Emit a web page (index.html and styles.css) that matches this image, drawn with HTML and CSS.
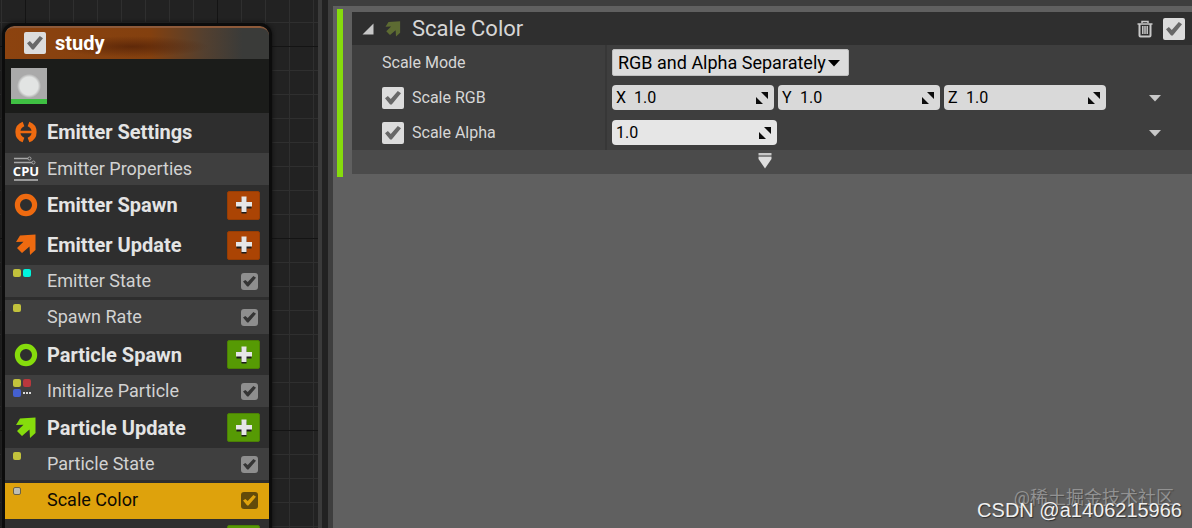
FILE: index.html
```
<!DOCTYPE html>
<html lang="en">

<head>
    <meta charset="UTF-8">
    <meta name="viewport" content="width=device-width, initial-scale=1.0">
    <title>Niagara Emitter - study</title>
    <link rel="stylesheet" href="styles.css">
</head>

<body>
    <!-- Shared icons -->
    <svg class="icon-defs" aria-hidden="true">
        <symbol id="icon-ring" viewBox="0 0 24 24">
            <circle cx="12" cy="12" r="8.6" fill="none" stroke="currentColor" stroke-width="5.2" />
        </symbol>
        <symbol id="icon-arrow" viewBox="0 0 24 24">
            <path fill="currentColor" d="M6 2.500L21.500 1.500V17L16 22L15.500 13.500L8 20L3 15L9.500 8.800L2 9Z" />
        </symbol>
        <symbol id="icon-plus" viewBox="0 0 18 18">
            <path fill="#1c1c1c" d="M6.500 2.500h5v5h5v5h-5v5h-5v-5h-5v-5h5z" />
            <path fill="#e6e6e6" d="M6.500 .5h5v5.500h5.500v4.500h-5.500v5.500h-5v-5.500h-5.500v-4.500h5.500z" />
        </symbol>
        <symbol id="icon-drag" viewBox="0 0 14 14">
            <path fill="#0c0c0c" d="M6 1H13V8ZM1 6V13H8Z" />
        </symbol>
        <symbol id="icon-down" viewBox="0 0 14 8">
            <path fill="currentColor" d="M1 1H13L7 7.500Z" />
        </symbol>
    </svg>

    <div class="editor">
        <!-- Overview graph -->
        <section class="graph">
            <div class="node">
                <header class="node-header">
                    <input type="checkbox" class="check" id="emitter-enabled" checked>
                    <label for="emitter-enabled">study</label>
                </header>
                <div class="node-preview">
                    <div class="thumbnail"></div>
                </div>

                <div class="group emitter settings">
                    <svg class="group-icon" viewBox="0 0 24 24">
                        <path fill="none" stroke="currentColor" stroke-width="5" d="M9.500 4A8.500 8.500 0 0 0 9.500 20M14.500 4A8.500 8.500 0 0 1 14.500 20" />
                        <path fill="none" stroke="currentColor" stroke-width="2.500" d="M5 12H19" />
                    </svg>
                    <h2>Emitter Settings</h2>
                </div>
                <div class="module">
                    <svg class="cpu-icon" viewBox="0 0 26 26">
                        <path fill="none" stroke="#a8a8a8" stroke-width="1.500" d="M1 2.500H15M1 6.500H19" />
                        <circle cx="16.500" cy="2.500" r="1.500" fill="none" stroke="#a8a8a8" />
                        <circle cx="20.500" cy="6.500" r="1.500" fill="none" stroke="#a8a8a8" />
                        <text x="13" y="20" text-anchor="middle">CPU</text>
                        <path stroke="#bdbdbd" stroke-width="1.500" d="M1 24H25" />
                    </svg>
                    <span>Emitter Properties</span>
                </div>

                <div class="group emitter">
                    <svg class="group-icon"><use href="#icon-ring" /></svg>
                    <h2>Emitter Spawn</h2>
                    <button type="button" class="add" aria-label="Add to Emitter Spawn"><svg><use href="#icon-plus" /></svg></button>
                </div>
                <div class="group emitter">
                    <svg class="group-icon"><use href="#icon-arrow" /></svg>
                    <h2>Emitter Update</h2>
                    <button type="button" class="add" aria-label="Add to Emitter Update"><svg><use href="#icon-plus" /></svg></button>
                </div>
                <div class="module">
                    <div class="tags"><i class="yellow"></i><i class="cyan"></i></div>
                    <label for="emitter-state">Emitter State</label>
                    <input type="checkbox" class="check small" id="emitter-state" checked>
                </div>
                <div class="module">
                    <div class="tags"><i class="yellow"></i></div>
                    <label for="spawn-rate">Spawn Rate</label>
                    <input type="checkbox" class="check small" id="spawn-rate" checked>
                </div>

                <div class="group particle">
                    <svg class="group-icon"><use href="#icon-ring" /></svg>
                    <h2>Particle Spawn</h2>
                    <button type="button" class="add" aria-label="Add to Particle Spawn"><svg><use href="#icon-plus" /></svg></button>
                </div>
                <div class="module">
                    <div class="tags"><i class="yellow"></i><i class="red"></i><i class="blue"></i><i class="more"></i></div>
                    <label for="initialize-particle">Initialize Particle</label>
                    <input type="checkbox" class="check small" id="initialize-particle" checked>
                </div>

                <div class="group particle">
                    <svg class="group-icon"><use href="#icon-arrow" /></svg>
                    <h2>Particle Update</h2>
                    <button type="button" class="add" aria-label="Add to Particle Update"><svg><use href="#icon-plus" /></svg></button>
                </div>
                <div class="module">
                    <div class="tags"><i class="yellow"></i></div>
                    <label for="particle-state">Particle State</label>
                    <input type="checkbox" class="check small" id="particle-state" checked>
                </div>
                <div class="module selected">
                    <div class="tags"><i class="gray"></i></div>
                    <label for="scale-color">Scale Color</label>
                    <input type="checkbox" class="check small" id="scale-color" checked>
                </div>
                <div class="group particle">
                    <svg class="group-icon" viewBox="0 0 24 24"><path fill="currentColor" d="M12 0L22 12L12 24L2 12Z" /></svg>
                    <button type="button" class="add" aria-label="Add event handler"><svg><use href="#icon-plus" /></svg></button>
                </div>
            </div>
        </section>

        <div class="splitter"></div>

        <!-- Selection details -->
        <main class="details">
            <div class="stack-item">
                <div class="card">
                    <header class="card-header">
                        <svg class="expander" viewBox="0 0 12 12"><path fill="#c8c8c8" d="M11.500 .5V11.500H.5Z" /></svg>
                        <svg class="card-icon"><use href="#icon-arrow" /></svg>
                        <h1>Scale Color</h1>
                        <button type="button" class="delete" aria-label="Delete">
                            <svg viewBox="0 0 16 18">
                                <path fill="none" stroke="#c8c8c8" stroke-width="1.500" d="M5 3V1.500H11V3M.5 4H15.500" />
                                <path fill="none" stroke="#c8c8c8" stroke-width="2" d="M2.500 4V15.500Q2.500 16.500 3.500 16.500H12.500Q13.500 16.500 13.500 15.500V4" />
                                <path stroke="#c8c8c8" stroke-width="1.500" d="M5.800 6V14M8 6V14M10.200 6V14" />
                            </svg>
                        </button>
                        <input type="checkbox" class="check" aria-label="Enabled" checked>
                    </header>

                    <div class="row">
                        <div class="row-name"><label for="scale-mode">Scale Mode</label></div>
                        <div class="row-value">
                            <div class="dropdown">
                                <select id="scale-mode">
                                    <option>RGB and Alpha Separately</option>
                                </select>
                                <svg><use href="#icon-down" /></svg>
                            </div>
                        </div>
                    </div>
                    <div class="row">
                        <div class="row-name">
                            <input type="checkbox" class="check" id="scale-rgb" checked>
                            <label for="scale-rgb">Scale RGB</label>
                        </div>
                        <div class="row-value">
                            <div class="field"><label for="rgb-x">X</label><input type="text" id="rgb-x" value="1.0"><svg><use href="#icon-drag" /></svg></div>
                            <div class="field"><label for="rgb-y">Y</label><input type="text" id="rgb-y" value="1.0"><svg><use href="#icon-drag" /></svg></div>
                            <div class="field"><label for="rgb-z">Z</label><input type="text" id="rgb-z" value="1.0"><svg><use href="#icon-drag" /></svg></div>
                            <button type="button" class="options" aria-label="Scale RGB options"><svg><use href="#icon-down" /></svg></button>
                        </div>
                    </div>
                    <div class="row">
                        <div class="row-name">
                            <input type="checkbox" class="check" id="scale-alpha" checked>
                            <label for="scale-alpha">Scale Alpha</label>
                        </div>
                        <div class="row-value">
                            <div class="field single"><input type="text" aria-label="Scale Alpha value" value="1.0"><svg><use href="#icon-drag" /></svg></div>
                            <button type="button" class="options" aria-label="Scale Alpha options"><svg><use href="#icon-down" /></svg></button>
                        </div>
                    </div>
                    <button type="button" class="show-more" aria-label="Show advanced">
                        <svg viewBox="0 0 14 16">
                            <path fill="#c8c8c8" d="M.5 0H13.500V2H.5Z" />
                            <path fill="#858585" d="M.5 2H13.500V4H.5Z" />
                            <path fill="#dedede" d="M.5 4H13.500V6L7 15.500L.5 6Z" />
                        </svg>
                    </button>
                </div>
            </div>
        </main>
    </div>

    <div class="watermark">
        <span class="site">@稀土掘金技术社区</span>
        <span class="author">CSDN @a1406215966</span>
    </div>
</body>

</html>
```
FILE: styles.css
```
/* Global Styles */
* {
    margin: 0;
    padding: 0;
    box-sizing: border-box;
}

body {
    background-color: #606060;
    color: #d6d6d6;
    font-family: Roboto, "Noto Sans CJK SC", sans-serif;
    font-size: 18px;
    line-height: 24px;
    overflow: hidden;
}

svg {
    display: block;
    flex: none;
}

button {
    border: none;
    background: none;
    cursor: pointer;
}

.icon-defs {
    display: none;
}

.editor {
    display: flex;
    height: 100vh;
}

/* Overview graph */
.graph {
    flex: none;
    width: 318px;
    padding: 23px 0 0 2px;
    overflow: hidden;
    background-color: #222;
    background-image:
        linear-gradient(90deg, #141414 1px, transparent 1px),
        linear-gradient(#141414 1px, transparent 1px),
        linear-gradient(90deg, #2f2f2f 1px, transparent 1px),
        linear-gradient(#2f2f2f 1px, transparent 1px);
    background-size: 192px 192px, 192px 192px, 24px 24px, 24px 24px;
    background-position: 25px 46px;
}

.node {
    width: 270px;
    border: 3px solid #0c0c0c;
    border-radius: 12px 12px 0 0;
    background-color: #2e2e2e;
    overflow: hidden;
    box-shadow: 0 0 4px #0c0c0c;
}

.node-header {
    display: flex;
    align-items: center;
    gap: 9px;
    height: 33px;
    padding: 0 0 2px 19px;
    border-radius: 9px 9px 0 0;
    border-top: 2px solid #8d5a3a;
    background:
        radial-gradient(ellipse at 48% 60%, rgba(70, 25, 5, 0.6), transparent 40%),
        linear-gradient(90deg, #8c430f, #83400f 55%, #54402f 75%, #3a3b39 90%);
    color: #fff;
    font-size: 20px;
    font-weight: bold;
}

.node-preview {
    height: 54px;
    padding: 9px 6px;
    background-color: #1b1c1a;
}

.thumbnail {
    width: 36px;
    height: 36px;
    border-bottom: 5px solid #3fc043;
    background: radial-gradient(circle at 50% 58%, #e2e4e3 9px, #aaa 12px);
}

.group {
    display: flex;
    align-items: center;
    height: 40px;
    padding: 0 9px;
    gap: 9px;
}

.group.settings {
    padding-bottom: 3px;
}

.group h2 {
    font-size: 20px;
    color: #e4e4e4;
}

.group-icon {
    width: 24px;
    height: 24px;
}

.emitter {
    color: #ee6a10;
}

.particle {
    height: 41px;
    color: #86dc0c;
}

.add {
    display: flex;
    align-items: center;
    justify-content: center;
    width: 33px;
    height: 29px;
    margin-left: auto;
    border: 1px solid #963d04;
    border-radius: 2px;
    background-color: #ab4404;
}

.particle .add {
    border-color: #4b8005;
    background-color: #569a04;
}

.add svg {
    width: 18px;
    height: 18px;
}

.module {
    display: flex;
    align-items: center;
    height: 32px;
    padding: 0 11px 0 8px;
    background-color: #3f3f3f;
    color: #d2d2d2;
}

.module + .module {
    height: 34px;
    margin-top: 3px;
}

.module .check {
    margin-left: auto;
}

.cpu-icon {
    width: 26px;
    height: 26px;
    margin-right: 8px;
}

.cpu-icon text {
    fill: #fff;
    font: bold 13px "Open Sans", sans-serif;
}

/* Colored tags that show which data a module touches */
.tags {
    display: flex;
    flex-wrap: wrap;
    align-content: flex-start;
    align-self: flex-start;
    gap: 2px;
    width: 34px;
    height: 22px;
    padding: 4px 14px 0 0;
}

.tags i {
    width: 8px;
    height: 8px;
    border-radius: 2px;
}

.yellow {
    background-color: #c2c23c;
}

.cyan {
    background-color: #00f4dc;
}

.red {
    background-color: #b8383d;
}

.blue {
    background-color: #4460d0;
}

.more {
    border-bottom: 2px dotted #d8d8d8;
}

.tags .more {
    height: 5px;
    border-radius: 0;
}

.gray {
    border: 1px solid #6b6246;
    background-color: #bdbdb4;
}

.module.selected {
    height: 36px;
    padding-bottom: 2px;
    background-color: #dea20c;
    color: #0e0b02;
}

/* Checkboxes */
.check {
    appearance: none;
    display: grid;
    place-items: center;
    flex: none;
    width: 22px;
    height: 22px;
    border-radius: 2px;
    background-color: #dcdcdc;
    color: #686868;
}

.check:checked::before {
    content: "";
    width: 16px;
    height: 14px;
    background-color: currentColor;
    clip-path: polygon(0 55%, 18% 40%, 36% 60%, 80% 4%, 100% 20%, 42% 100%, 32% 100%);
}

.check.small {
    width: 17px;
    height: 17px;
    border-radius: 3px;
    background-color: #8e8e8e;
    color: #353535;
}

.check.small:checked::before {
    width: 13px;
    height: 11px;
}

.selected .check.small {
    background-color: #624a0a;
    color: #dea20c;
}

/* Splitter */
.splitter {
    flex: none;
    width: 15px;
    border-left: 4px solid #3b3b3b;
    border-right: 5px solid #3e3e3e;
    background-color: #222;
}

/* Details */
.details {
    flex: 1;
    min-width: 0;
    padding: 3px 0 0 4px;
    border-top: 6px solid #3e3e3e;
    background-color: #606060;
}

.stack-item {
    padding: 3px 0 3px 9px;
    border-left: 6px solid #86dc0c;
}

.card {
    background-color: #3e3e3e;
}

.card-header {
    display: flex;
    align-items: center;
    height: 33px;
    padding: 0 7px 0 10px;
    background-color: #2f2f2f;
}

.card-header h1 {
    margin-left: 10px;
    font-size: 22px;
    font-weight: normal;
}

.expander {
    width: 12px;
    height: 12px;
}

.card-icon {
    width: 18px;
    height: 18px;
    margin-left: 10px;
    color: #5d6b32;
}

.delete {
    margin: 0 10px 0 auto;
}

.delete svg {
    width: 16px;
    height: 18px;
}

.row {
    display: flex;
    height: 35px;
}

.row-name {
    display: flex;
    align-items: center;
    flex: none;
    gap: 8px;
    width: 255px;
    padding-left: 30px;
    border-right: 2px solid #373737;
    font-size: 16px;
}

.row-value {
    display: flex;
    align-items: center;
    flex: 1;
    gap: 4px;
    padding: 0 30px 0 5px;
}

.dropdown {
    display: grid;
    align-items: center;
}

.dropdown select,
.dropdown svg {
    grid-area: 1 / 1;
}

.dropdown select {
    appearance: none;
    width: 237px;
    height: 27px;
    padding-left: 5px;
    border: 1px solid #c0c0c0;
    border-radius: 2px;
    background-color: #dcdcdc;
    color: #000;
    font: 18px Roboto, sans-serif;
}

.dropdown svg {
    width: 14px;
    height: 8px;
    justify-self: end;
    margin-right: 8px;
    color: #000;
    pointer-events: none;
}

.field {
    display: flex;
    align-items: center;
    width: 162px;
    height: 25px;
    padding: 0 5px 0 4px;
    border-radius: 4px;
    background-color: #d9d9d9;
    color: #000;
    font-size: 16px;
}

.field label {
    width: 18px;
}

.field input {
    flex: 1;
    min-width: 0;
    border: none;
    outline: none;
    background: none;
    font: 16px Roboto, sans-serif;
}

.field svg {
    width: 14px;
    height: 14px;
}

.field.single {
    width: 165px;
    background-color: #e6e6e6;
}

.options {
    margin-left: auto;
    color: #c8c8c8;
}

.options svg {
    width: 14px;
    height: 8px;
}

.show-more {
    display: flex;
    justify-content: center;
    width: 100%;
    height: 24px;
    padding: 3px 15px 0 0;
    background-color: #4b4b4b;
}

.show-more svg {
    width: 14px;
    height: 16px;
}

/* Watermark over the panel */
.watermark {
    position: absolute;
    right: 10px;
    bottom: 6px;
    display: grid;
    justify-items: end;
    pointer-events: none;
}

.watermark .site {
    margin: 0 8px -12px 0;
    color: #929292;
    font-size: 18px;
    text-shadow: 1px 1px 1px #484848;
}

.watermark .author {
    color: #f0f0f0;
    font-family: "Liberation Sans", sans-serif;
    font-size: 20px;
    line-height: 24px;
    text-shadow: 1px 1px 1px #303030;
}
```
